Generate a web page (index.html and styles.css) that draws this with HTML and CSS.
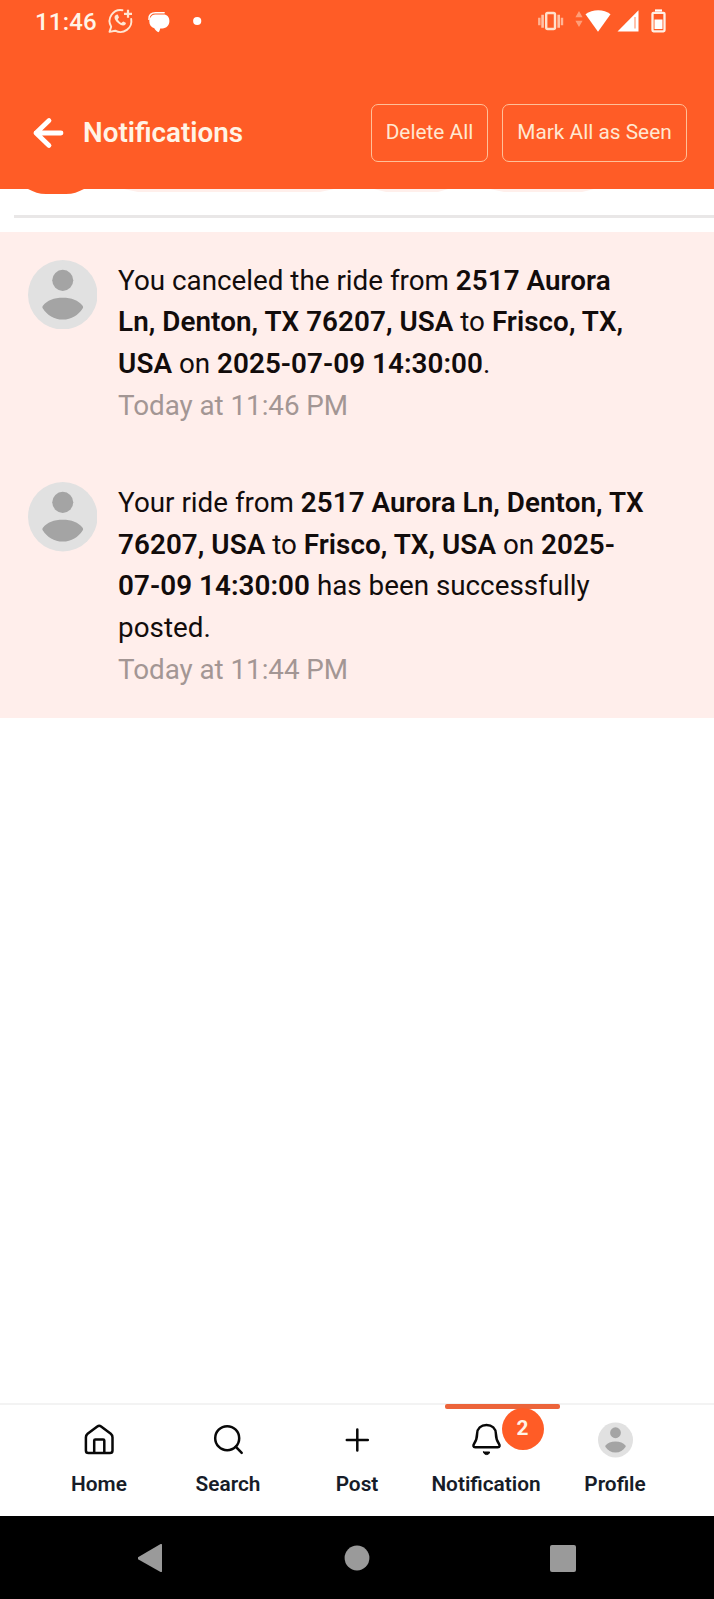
FILE: index.html
```html
<!DOCTYPE html>
<html lang="en">
<head>
<meta charset="utf-8">
<title>Notifications</title>
<link rel="stylesheet" href="styles.css">
</head>
<body>
<div class="screen">
  <header class="header">
    <div class="status">
      <span class="clock">11:46</span>
      <svg class="status-left" width="100" height="44" viewBox="105 0 100 44" fill="none">
        <path d="M122.500 10.200a11 11 0 0 0-11.300 16.500l-1.700 5.200 5.700-1.200a11 11 0 0 0 16-11.700" stroke="#ffe6d2" stroke-width="1.900" stroke-linecap="round" stroke-linejoin="round"/>
        <path d="M115.600 15.300c-1.800 1.300-1.300 4.200 1.900 7.300 3.300 3.200 6.500 3.700 8.100 1.700.5-.7.300-1.300-.3-1.700l-2.100-1.200-1.900 1.500c-1.700-.7-3-2.100-3.600-3.600l1.300-1.900-1-2.300c-.5-.8-1.500-.5-2.400.2z" fill="#ffe6d2"/>
        <path d="M128 9.800v8M124 13.800h8" stroke="#ffe6d2" stroke-width="2.200"/>
        <path d="M155 14.600h8.500c3.600 0 5.900 2.600 5.900 6.300 0 4.300-3 7.300-7 7.500h-2.200c-.3 1.500-.6 2.600-1.700 3.800-2-1-3.300-2.300-4.200-4-3.200-1-5-3.300-5-6.900 0-3 2.600-6.700 5.700-6.700z" fill="#fff"/>
        <path d="M149 19.300c-.6-4.300 2.600-6.500 6.500-6.500h8.600" stroke="#fff" stroke-width="1.600" stroke-linecap="round"/>
        <circle cx="197.200" cy="21" r="4.100" fill="#fff"/>
      </svg>
      <svg class="status-right" width="134" height="44" viewBox="535 0 134 44" fill="none">
        <rect x="546.200" y="13" width="8.800" height="16" rx="1.500" stroke="#ffe0cc" stroke-width="2.400"/>
        <path d="M542.600 14.800v13M558.700 14.800v13" stroke="#ffc3a8" stroke-width="2.600"/>
        <path d="M539.300 17.800v7.500M562 17.800v7.500" stroke="#ffb495" stroke-width="2.400"/>
        <path d="M579 11l3.600 6.300h-7.200zM579 27l3.600-6.300h-7.200z" fill="#ff9e78"/>
        <path d="M585.500 14.200c7-5.400 18.500-5.400 25 0L598 31.700z" fill="#fff"/>
        <path d="M617.500 31.500L638.500 10.200v21.300z" fill="#fff"/>
        <path d="M635 17v11.500" stroke="#ff9a76" stroke-width="1.200"/>
        <path d="M655 10.500h7" stroke="#fff" stroke-width="2.200"/>
        <rect x="652.500" y="12.800" width="12" height="18.500" rx="1" stroke="#fff0e5" stroke-width="2.300"/>
        <rect x="654.500" y="19.500" width="8" height="9.500" fill="#fff"/>
      </svg>
    </div>
    <div class="toolbar">
      <svg class="back" width="32" height="32" viewBox="0 0 32 32" fill="none" stroke="#fff" stroke-width="4.800" stroke-linecap="round" stroke-linejoin="round"><path d="M29 16H4M17 3.600L4 16 17 28.400"/></svg>
      <h1 class="title">Notifications</h1>
      <button class="action">Delete All</button>
      <button class="action mark">Mark All as Seen</button>
    </div>
  </header>
  <div class="tabs">
    <svg width="714" height="8" viewBox="0 0 714 8">
      <path d="M28 0H84C78 3 73 5 66 5H46C39 5 34 3 28 0z" fill="#ff5c26"/>
      <path d="M124 0H334L320 3H138zM374 0H448L438 3H386zM490 0H594L582 3H504z" fill="#ffefeb"/>
    </svg>
    <div class="rule"></div>
  </div>
  <main class="list">
    <article class="item">
      <svg class="avatar" viewBox="0 0 70 70"><circle cx="35" cy="35" r="35" fill="#e1e1e1"/><circle cx="35" cy="20.500" r="10.600" fill="#a4a4a4"/><path d="M15 46C19.500 40.500 26 38 35 38s15.500 2.500 20 8c.7.900.7 1.900 0 2.800C50.500 55.500 44 60 35 60S19.500 55.500 15 48.800c-.7-.9-.7-1.900 0-2.800z" fill="#a4a4a4"/></svg>
      <div class="text">
        <p>You canceled the ride from <b>2517 Aurora Ln, Denton, TX 76207, USA</b> to <b>Frisco, TX, USA</b> on <b>2025-07-09 14:30:00</b>.</p>
        <p class="time">Today at 11:46 PM</p>
      </div>
    </article>
    <article class="item">
      <svg class="avatar" viewBox="0 0 70 70"><circle cx="35" cy="35" r="35" fill="#e1e1e1"/><circle cx="35" cy="20.500" r="10.600" fill="#a4a4a4"/><path d="M15 46C19.500 40.500 26 38 35 38s15.500 2.500 20 8c.7.900.7 1.900 0 2.800C50.500 55.500 44 60 35 60S19.500 55.500 15 48.800c-.7-.9-.7-1.900 0-2.800z" fill="#a4a4a4"/></svg>
      <div class="text">
        <p>Your ride from <b>2517 Aurora Ln, Denton, TX 76207, USA</b> to <b>Frisco, TX, USA</b> on <b>2025-07-09 14:30:00</b> has been successfully posted.</p>
        <p class="time">Today at 11:44 PM</p>
      </div>
    </article>
  </main>
  <nav class="nav">
    <a class="tab">
      <svg class="icon" viewBox="0 0 36 36"><path d="M4.900 15.500c0-1.700.5-2.700 1.700-3.700l9.700-7.400c1.300-1 2.500-1 3.800 0l9.700 7.400c1.200 1 1.700 2 1.700 3.700v13c0 1.700-.9 2.600-2.600 2.600H7.500c-1.700 0-2.600-.9-2.600-2.600zM13.200 31V18.500c0-.8.300-1.100 1.100-1.100h7.900c.8 0 1.100.3 1.100 1.100V31"/></svg>
      <span>Home</span>
    </a>
    <a class="tab">
      <svg class="icon" viewBox="0 0 36 36"><circle cx="17.200" cy="16.200" r="12"/><path d="M25.900 24.900l5.800 6"/></svg>
      <span>Search</span>
    </a>
    <a class="tab">
      <svg class="icon" viewBox="0 0 36 36"><path d="M18.300 7.500v21M7.800 18h21"/></svg>
      <span>Post</span>
    </a>
    <a class="tab active">
      <svg class="icon" viewBox="0 0 36 36"><path d="M18.500 3c-5.600 0-9.200 3.600-9.400 8.800-.1 4.500-.6 6.600-3 10-1.100 1.600-.9 3.500 1.100 3.500h22.600c2 0 2.200-1.900 1.100-3.500-2.400-3.400-2.900-5.500-3-10-.2-5.200-3.800-8.800-9.400-8.800z"/><path d="M15.500 30h6.200c-.4 1.700-1.500 2.600-3.100 2.600s-2.700-.9-3.100-2.600z" fill="#080808" stroke-width="1"/></svg>
      <span>Notification</span>
      <i class="badge">2</i>
    </a>
    <a class="tab">
      <svg class="icon face" viewBox="0 0 70 70"><circle cx="35" cy="35" r="35" fill="#e1e1e1"/><circle cx="35" cy="20.500" r="10.800" fill="#a4a4a4"/><path d="M15 46C19.500 40.500 26 38 35 38s15.500 2.500 20 8c.7.900.7 1.900 0 2.800C50.500 55.500 44 60 35 60S19.500 55.500 15 48.800c-.7-.9-.7-1.900 0-2.800z" fill="#a4a4a4"/></svg>
      <span>Profile</span>
    </a>
  </nav>
  <footer class="system">
    <svg width="26" height="28" viewBox="0 0 26 28"><path d="M23.600 0L1 13.200v2.100L23.600 28c.8.300 1.400 0 1.400-.8V.8c0-.8-.6-1.100-1.400-.8z" fill="#9a9a9a"/></svg>
    <svg width="26" height="26" viewBox="0 0 26 26"><circle cx="13" cy="13" r="12.400" fill="#9a9a9a"/></svg>
    <svg width="26" height="27" viewBox="0 0 26 27"><rect width="26" height="27" rx="2" fill="#9a9a9a"/></svg>
  </footer>
</div>
</body>
</html>
```
FILE: styles.css
```css
* { box-sizing: border-box; }
body { margin: 0; font-family: Roboto, sans-serif; background: #fff; color: #120c0b; }
p, h1 { margin: 0; }
.screen { width: 714px; height: 1599px; display: flex; flex-direction: column; }
.header { height: 189px; background: #ff5c26; color: #fff4e6; flex: none; }
.status { height: 44px; display: flex; padding-left: 35px; }
.clock { width: 70px; font-size: 24px; line-height: 45px; font-weight: 500; letter-spacing: .2px; }
.status-right { margin-left: 330px; }
.toolbar { height: 117px; padding: 60px 27px 0 32px; display: flex; align-items: center; }
.back { flex: none; }
.title { margin-left: 19px; font-size: 27.800px; line-height: 56px; font-weight: 600; flex: 1; }
.action { height: 58px; width: 117px; flex: none; border: 1.500px solid #ffc098; border-radius: 7px; padding: 0; background: none; color: #ffe8d2; font: 400 20.840px/1 Roboto, sans-serif; white-space: nowrap; }
.mark { width: 185px; margin-left: 14px; }
.tabs { height: 43px; flex: none; }
.tabs svg { display: block; }
.rule { margin: 18px 0 0 14px; height: 3px; background: #e9e7e7; }
.list { background: #ffeeeb; flex: none; height: 486px; }
.item { display: flex; gap: 20.800px; padding: 27.800px 64px 27.800px 27.800px; }
.avatar { width: 69.500px; height: 69.500px; flex: none; }
.text { flex: 1; font-size: 27.800px; line-height: 41.700px; margin-top: -.2px; }
.text b { font-weight: 600; letter-spacing: .06px; }
.text .time { color: #a39694; letter-spacing: -.05px; }
.nav { margin-top: auto; height: 113px; flex: none; border-top: 2px solid #f3f3f3; padding: 0 34.500px; display: grid; grid-template-columns: repeat(5, 1fr); }
.tab { position: relative; display: flex; flex-direction: column; align-items: center; padding-top: 17.500px; color: #161c28; font-size: 20.840px; line-height: 30px; font-weight: 600; }
.tab span { margin-top: 11px; }
.icon { width: 36px; height: 36px; flex: none; fill: none; stroke: #080808; stroke-width: 2.500; stroke-linecap: round; stroke-linejoin: round; }
.face { stroke: none; width: 35px; }
.active::before { content: ""; position: absolute; top: -1px; left: 23px; right: -9px; height: 5px; border-radius: 2px; background: #ec643a; }
.badge { position: absolute; left: 80px; top: 3px; width: 42px; height: 42px; border-radius: 50%; background: #ff5c26; color: #fff4e6; font-style: normal; font-weight: 700; line-height: 40px; text-align: center; }
.system { height: 83.500px; flex: none; background: #000; display: flex; justify-content: space-between; align-items: center; padding: 2px 138px 0 137px; }
```
